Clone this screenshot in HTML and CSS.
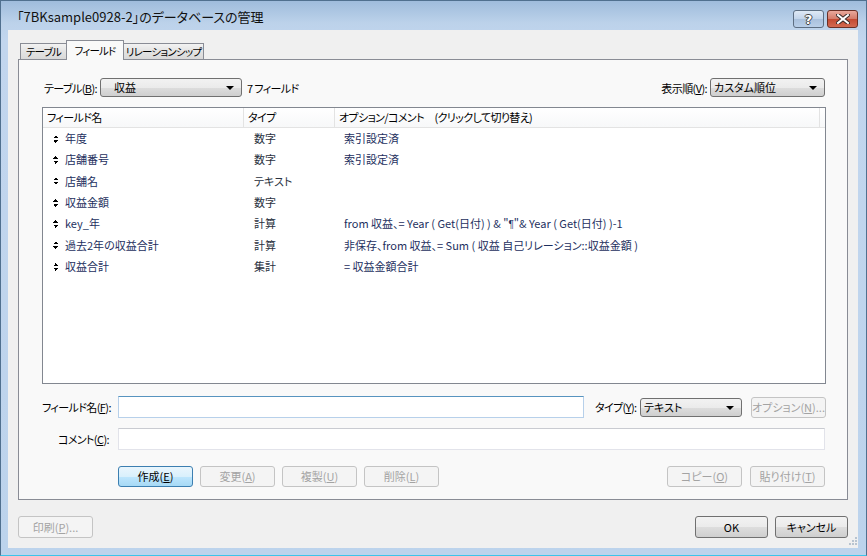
FILE: index.html
```html
<!DOCTYPE html>
<html lang="ja">
<head>
  <meta charset="UTF-8" />
  <title>データベースの管理</title>
  <link rel="stylesheet" href="styles.css">
</head>
<body>

  <div class="window">
    <div class="titlebar">
      <span class="title">「7BKsample0928-2」のデータベースの管理</span>
      <div class="caption-buttons">
        <span class="cap help">?</span>
        <span class="cap close">
          <svg width="14" height="10" viewBox="0 0 14 10">
            <path d="M2 1 L12 9 M12 1 L2 9" stroke="#3a2a28" stroke-width="4" stroke-linecap="square"/>
            <path d="M2 1 L12 9 M12 1 L2 9" stroke="#ffffff" stroke-width="2" stroke-linecap="square"/>
          </svg>
        </span>
      </div>
    </div>

    <div class="client">
      <div class="tabs">
        <span class="tab tab-table">テーブル</span>
        <span class="tab tab-field active">フィールド</span>
        <span class="tab tab-rel">リレーションシップ</span>
      </div>

      <div class="panel">
        <div class="toolbar">
          <div class="toolbar-left">
            <span class="label">テーブル(<u>B</u>):</span>
            <span class="select table-select">収益</span>
            <span class="count">7 フィールド</span>
          </div>
          <div class="toolbar-right">
            <span class="label">表示順(<u>V</u>):</span>
            <span class="select order-select">カスタム順位</span>
          </div>
        </div>

        <div class="list">
          <div class="list-head">
            <span class="col-name">フィールド名</span>
            <span class="col-type">タイプ</span>
            <span class="col-opt">オプション/コメント　(クリックして切り替え)</span>
            <span class="col-end"></span>
          </div>
          <div class="row"><span class="col-name"><i class="grip"></i>年度</span><span class="col-type">数字</span><span class="col-opt">索引設定済</span></div>
          <div class="row"><span class="col-name"><i class="grip"></i>店舗番号</span><span class="col-type">数字</span><span class="col-opt">索引設定済</span></div>
          <div class="row"><span class="col-name"><i class="grip"></i>店舗名</span><span class="col-type">テキスト</span><span class="col-opt"></span></div>
          <div class="row"><span class="col-name"><i class="grip"></i>収益金額</span><span class="col-type">数字</span><span class="col-opt"></span></div>
          <div class="row"><span class="col-name"><i class="grip"></i>key_年</span><span class="col-type">計算</span><span class="col-opt">from 収益、= Year ( Get(日付) ) &amp; "<span class="pilcrow">¶</span>"&amp; Year ( Get(日付) )-1</span></div>
          <div class="row"><span class="col-name"><i class="grip"></i>過去2年の収益合計</span><span class="col-type">計算</span><span class="col-opt">非保存、from 収益、= Sum ( 収益 自己リレーション::収益金額 )</span></div>
          <div class="row"><span class="col-name"><i class="grip"></i>収益合計</span><span class="col-type">集計</span><span class="col-opt">= 収益金額合計</span></div>
        </div>

        <div class="editor">
          <div class="editor-row">
            <span class="field-label">フィールド名(<u>F</u>):</span>
            <span class="input name-input"></span>
            <span class="type-label">タイプ(<u>Y</u>):</span>
            <span class="select type-select">テキスト</span>
            <span class="btn disabled option-btn">オプション(<u>N</u>)...</span>
          </div>
          <div class="editor-row comment-row">
            <span class="field-label">コメント(<u>C</u>):</span>
            <span class="input comment-input"></span>
          </div>
        </div>

        <div class="actions">
          <div class="btn-group">
            <span class="btn primary">作成(<u>E</u>)</span>
            <span class="btn disabled">変更(<u>A</u>)</span>
            <span class="btn disabled">複製(<u>U</u>)</span>
            <span class="btn disabled">削除(<u>L</u>)</span>
          </div>
          <div class="btn-group">
            <span class="btn disabled">コピー(<u>O</u>)</span>
            <span class="btn disabled">貼り付け(<u>T</u>)</span>
          </div>
        </div>
      </div>

      <div class="footer">
        <span class="btn disabled">印刷(<u>P</u>)...</span>
        <div class="btn-group">
          <span class="btn">OK</span>
          <span class="btn">キャンセル</span>
        </div>
      </div>

      <svg class="size-grip" width="11" height="11" viewBox="0 0 11 11">
        <g fill="#b8c4d0">
          <rect x="8" y="0" width="2" height="2"/>
          <rect x="5" y="3" width="2" height="2"/><rect x="8" y="3" width="2" height="2"/>
          <rect x="2" y="6" width="2" height="2"/><rect x="5" y="6" width="2" height="2"/><rect x="8" y="6" width="2" height="2"/>
        </g>
      </svg>
    </div>
  </div>

</body>
</html>
```

FILE: styles.css
```css
* {
  box-sizing: border-box;
}
body {
  margin: 0;
  padding: 0;
  font-family: "Noto Sans CJK JP", "Noto Sans", sans-serif;
  font-feature-settings: "palt" 1;
  font-size: 11px;
  color: #000;
  background: #c2d6ec;
}

u {
  text-decoration: underline;
  text-underline-offset: 1px;
}

.window {
  width: 867px;
  height: 556px;
  display: flex;
  flex-direction: column;
  border: 1px solid #50708f;
  border-bottom-color: #3bc4ea;
  background: linear-gradient(#9fbcdc 0, #bcd2ea 22px, #c2d6ee 40px, #bcd3ec 100%);
  overflow: hidden;
}

.titlebar {
  height: 29px;
  display: flex;
  justify-content: space-between;
  align-items: flex-start;
  padding: 0 8px 0 16px;
}
.title {
  font-size: 13px;
  line-height: 29px;
  padding-top: 1px;
  color: #111;
  white-space: nowrap;
}
.caption-buttons {
  display: flex;
  gap: 3px;
  margin-top: 9px;
}
.cap {
  height: 18px;
  border: 1px solid #5d6e82;
  border-radius: 3px;
  display: flex;
  align-items: center;
  justify-content: center;
}
.help {
  width: 31px;
  background: linear-gradient(#dfe9f5, #c2d4ea 50%, #a9c0dc 51%, #b9cfe8);
  color: #fff;
  font-family: "DejaVu Sans", sans-serif;
  font-weight: bold;
  font-size: 13px;
  text-shadow: 1px 0 #444, -1px 0 #444, 0 1px #444, 0 -1px #444;
}
.close {
  width: 31px;
  border-color: #6a3026;
  background: linear-gradient(#e9a99c, #d47a68 50%, #c44a32 51%, #d26a52);
}

.client {
  position: relative;
  flex: 1;
  margin: 0 8px 7px 7px;
  background: #f0f0f0;
  display: flex;
  flex-direction: column;
  padding: 10px 10px 0;
}

.tabs {
  display: flex;
  align-items: flex-end;
  height: 19px;
  padding-left: 2px;
}
.tab {
  height: 16px;
  line-height: 15px;
  text-align: center;
  font-size: 10.5px;
  letter-spacing: -0.8px;
  white-space: nowrap;
  border: 1px solid #898c95;
  border-bottom: none;
  background: linear-gradient(#f2f2f2, #e3e3e3 50%, #d9d9d9);
  margin-right: -1px;
}
.tab-table {
  width: 47px;
}
.tab-field {
  width: 58px;
}
.tab-rel {
  width: 81px;
}
.tab.active {
  height: 20px;
  line-height: 19px;
  background: #f9f9f9;
  position: relative;
  z-index: 1;
  margin-bottom: -1px;
}

.panel {
  height: 441px;
  border: 1px solid #898c95;
  background: #f9f9f9;
  padding: 18px 21px 0 23px;
  display: flex;
  flex-direction: column;
}

.toolbar {
  display: flex;
  justify-content: space-between;
  align-items: center;
  height: 19px;
}
.toolbar-left, .toolbar-right {
  display: flex;
  align-items: center;
  white-space: nowrap;
}
.label, .count, .field-label, .type-label, .list-head {
  letter-spacing: -0.6px;
}
.label {
  margin-right: 3px;
  margin-left: 2px;
}
.select {
  position: relative;
  height: 19px;
  line-height: 17px;
  border: 1px solid #707070;
  border-radius: 3px;
  background: linear-gradient(#f2f2f2, #ebebeb 50%, #dddddd 51%, #cfcfcf);
  padding-left: 3px;
  white-space: nowrap;
}
.select::after {
  content: "";
  position: absolute;
  right: 7px;
  top: 7px;
  border-left: 4px solid transparent;
  border-right: 4px solid transparent;
  border-top: 4px solid #000;
}
.table-select {
  width: 142px;
  padding-left: 13px;
}
.count {
  margin-left: 5px;
}
.order-select {
  width: 115px;
  margin-right: 1px;
}

.list {
  margin-top: 10px;
  height: 277px;
  border: 1px solid #828790;
  background: #fff;
}
.list-head {
  display: flex;
  height: 20px;
  line-height: 19px;
  border-bottom: 1px solid #e3e3e3;
  background: linear-gradient(#ffffff, #f7f8f9);
  white-space: nowrap;
}
.list-head span {
  border-right: 1px solid #e3e3e3;
  padding-left: 4px;
}
.list-head .col-end {
  border-right: none;
  width: 5px;
  flex: none;
}
.col-name {
  width: 201px;
  flex: none;
}
.col-type {
  width: 91px;
  flex: none;
}
.col-opt {
  flex: 1;
}

.row {
  display: flex;
  height: 21.33px;
  line-height: 21px;
  color: #1d2f5e;
  white-space: nowrap;
}
.row .col-name {
  display: flex;
  align-items: center;
  padding-left: 10px;
}
.row .col-type {
  padding-left: 10px;
  color: #2a3140;
}
.row .col-opt {
  padding-left: 9px;
}
.pilcrow {
  font-family: "Liberation Sans", sans-serif;
  font-size: 10px;
}
.grip {
  width: 5px;
  height: 8px;
  margin-right: 7px;
  background:
    linear-gradient(to bottom right, transparent 50%, #000 50%) left top / 3px 3px no-repeat,
    linear-gradient(to bottom left, transparent 50%, #000 50%) right top / 2px 3px no-repeat,
    linear-gradient(to top right, transparent 50%, #000 50%) left bottom / 3px 3px no-repeat,
    linear-gradient(to top left, transparent 50%, #000 50%) right bottom / 2px 3px no-repeat;
}

.editor {
  margin-top: 12px;
}
.editor-row {
  display: flex;
  align-items: center;
  height: 22px;
  white-space: nowrap;
}
.comment-row {
  margin-top: 10px;
}
.field-label {
  flex: none;
  width: 76px;
  text-align: right;
  padding-right: 9px;
}
.input {
  flex: none;
  height: 22px;
  background: #fff;
  border: 1px solid #dbdfe6;
  border-top-color: #abadb3;
}
.name-input {
  width: 466px;
  border-color: #b7d0ea;
  border-top-color: #5794bf;
}
.comment-input {
  width: 707px;
  border-color: #e2e3ea;
  border-top-color: #c9cbd1;
}
.type-label {
  flex: none;
  width: 56px;
  padding-left: 11px;
}
.type-select {
  flex: none;
  width: 102px;
}
.option-btn {
  margin-left: 9px;
  height: 21px;
}

.actions {
  margin-top: 16px;
  padding-left: 76px;
  display: flex;
  justify-content: space-between;
}
.btn-group {
  display: flex;
  gap: 7px;
}
.btn {
  flex: none;
  width: 75px;
  height: 21px;
  line-height: 19px;
  text-align: center;
  border: 1px solid #707070;
  border-radius: 3px;
  background: linear-gradient(#f2f2f2, #ebebeb 50%, #dddddd 51%, #cfcfcf);
  white-space: nowrap;
}
.btn.primary {
  border-color: #3c7fb1;
  background: linear-gradient(#eaf6fd, #d9f0fc 50%, #bee6fd 51%, #a7d9f5);
}
.btn.disabled {
  color: #a3a3a3;
  border-color: #c4c4c4;
  background: #f4f4f4;
}
.actions .btn-group:last-child {
  gap: 8px;
  margin-right: 1px;
}

.footer {
  margin-top: 16px;
  display: flex;
  justify-content: space-between;
}
.footer .btn {
  height: 22px;
  line-height: 20px;
}
.footer .btn-group {
  gap: 7px;
}
.footer .btn-group .btn {
  width: 73px;
}

.size-grip {
  position: absolute;
  right: 0;
  bottom: 0;
}
```
